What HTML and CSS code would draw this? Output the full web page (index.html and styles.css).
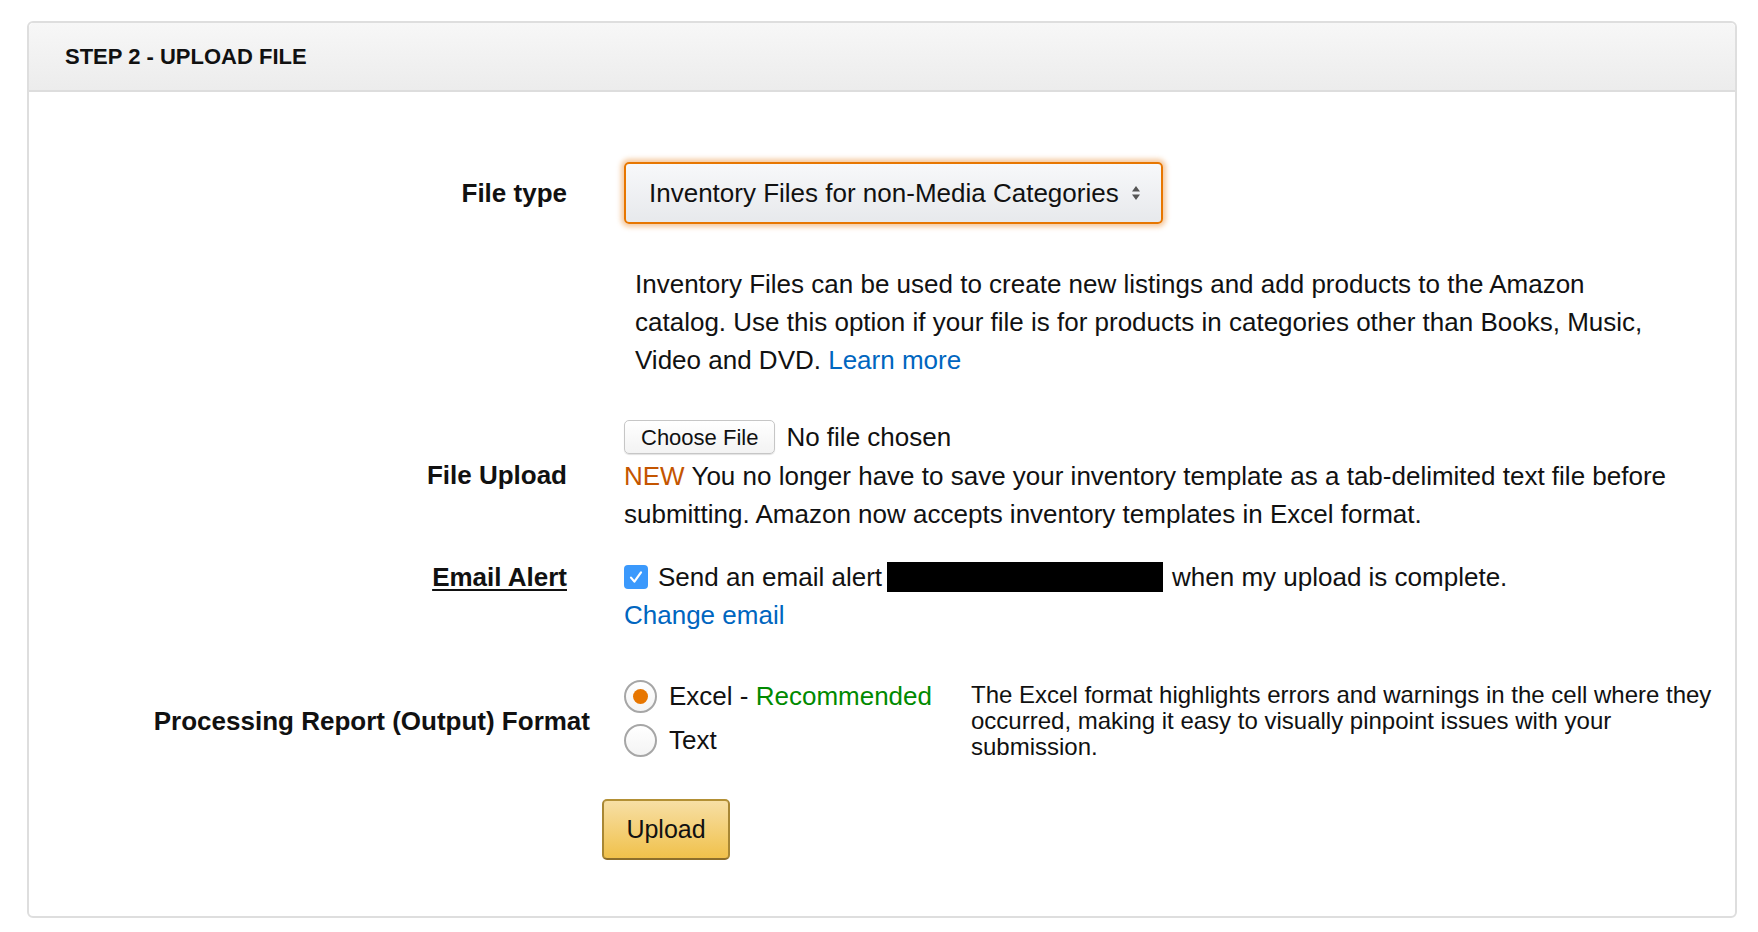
FILE: index.html
```html
<!DOCTYPE html>
<html lang="en">
<head>
<meta charset="utf-8">
<title>Step 2 - Upload File</title>
<link rel="stylesheet" href="styles.css">
</head>
<body>
<div class="panel">
  <div class="panel-head"><h2>STEP 2 - UPLOAD FILE</h2></div>
  <div class="panel-body">
    <div class="row row-center">
      <div class="label">File type</div>
      <div class="field">
        <div class="select">
          <span>Inventory Files for non-Media Categories</span>
          <svg class="arrows" width="8" height="16" viewBox="0 0 8 16"><path d="M0 6.5 L4 1 L8 6.5 Z M0 9.5 L4 15 L8 9.5 Z" fill="#555"/></svg>
        </div>
      </div>
    </div>
    <div class="row row-desc">
      <div class="label"></div>
      <div class="field">
        <p class="desc">Inventory Files can be used to create new listings and add products to the Amazon catalog. Use this option if your file is for products in categories other than Books, Music, Video and DVD. <a href="#" class="link">Learn more</a></p>
      </div>
    </div>
    <div class="row row-center row-upload">
      <div class="label">File Upload</div>
      <div class="field">
        <div class="file-line"><span class="file-btn">Choose File</span><span class="file-name">No file chosen</span></div>
        <p class="lines"><span class="new">NEW</span> You no longer have to save your inventory template as a tab-delimited text file before submitting. Amazon now accepts inventory templates in Excel format.</p>
      </div>
    </div>
    <div class="row row-top row-email">
      <div class="label"><span class="u">Email Alert</span></div>
      <div class="field">
        <div class="lines"><span class="check"><svg width="24" height="24" viewBox="0 0 24 24"><path d="M7 12.6 L10.4 16.6 L17 7.4" fill="none" stroke="#fff" stroke-width="2.2" stroke-linecap="round" stroke-linejoin="round"/></svg></span>Send an email alert<span class="redact"></span>when my upload is complete.</div>
        <div class="lines"><a href="#" class="link">Change email</a></div>
      </div>
    </div>
    <div class="row row-center row-report">
      <div class="label label-wide">Processing Report (Output) Format</div>
      <div class="field field-report">
        <div class="radios">
          <div class="opt"><span class="radio on"></span>Excel - <span class="rec">Recommended</span></div>
          <div class="opt"><span class="radio"></span>Text</div>
        </div>
        <p class="note">The Excel format highlights errors and warnings in the cell where they occurred, making it easy to visually pinpoint issues with your submission.</p>
      </div>
    </div>
    <div class="row row-submit">
      <button class="upload" type="button">Upload</button>
    </div>
  </div>
</div>
</body>
</html>
```

FILE: styles.css
```css
html, body {
  margin: 0;
  padding: 0;
  background: #fff;
}

body {
  padding: 21px 21px 0 27px;
  font-family: "Liberation Sans", Arial, Helvetica, sans-serif;
  color: #111;
  font-size: 26px;
}

.panel {
  width: 1706px;
  border: 2px solid #dedede;
  border-radius: 6px;
  background: #fff;
}

.panel-head {
  background: linear-gradient(#f7f7f7, #ececec);
  border-bottom: 2px solid #dddddd;
  border-radius: 5px 5px 0 0;
}

.panel-head h2 {
  margin: 0;
  padding: 21px 36px 20px;
  font-size: 22px;
  line-height: 26px;
  font-weight: bold;
  color: #111;
}

.panel-body {
  padding: 70px 17px 56px 0;
}

.row {
  display: flex;
  gap: 57px;
}

.row-center { align-items: center; }
.row-top { align-items: flex-start; }

.label {
  flex: 0 0 538px;
  text-align: right;
  font-weight: bold;
  font-size: 26px;
  line-height: 38px;
  color: #111;
}

.label .u { text-decoration: underline; text-underline-offset: 3px; }

.field {
  flex: 0 1 1051px;
  min-width: 0;
}

/* select */
.select {
  box-sizing: border-box;
  width: 539px;
  height: 62px;
  display: flex;
  align-items: center;
  justify-content: space-between;
  padding: 0 21px 0 23px;
  border: 2px solid #e77600;
  border-radius: 5px;
  background: linear-gradient(#f7f8fa, #e7e9ec);
  box-shadow: 0 0 5px 3px rgba(228, 121, 17, 0.4);
  font-size: 26px;
  color: #111;
}

.arrows { display: block; }

/* description */
.row-desc { margin-top: 41px; }

.desc {
  margin: 0;
  padding-left: 11px;
  line-height: 38px;
}

.link { color: #0066c0; text-decoration: none; }

/* file upload */
.row-upload { margin-top: 38px; }

.file-line {
  height: 40px;
  display: flex;
  align-items: center;
}

.file-btn {
  box-sizing: border-box;
  height: 34px;
  display: inline-flex;
  align-items: center;
  padding: 2px 16px 0;
  border: 1px solid #c6c6c6;
  border-radius: 5px;
  background: linear-gradient(#ffffff, #f3f3f3);
  box-shadow: 0 1px 1px rgba(0, 0, 0, 0.12);
  font-size: 22px;
  color: #111;
}

.file-name { margin-left: 11px; font-size: 26px; }

.lines {
  margin: 0;
  line-height: 38px;
}

.new { color: #c45500; }

/* email */
.row-email { margin-top: 25px; }

.check {
  display: inline-block;
  width: 24px;
  height: 24px;
  border-radius: 4px;
  background: #3b99fc;
  vertical-align: -3px;
  margin-right: 10px;
}

.check svg { display: block; }

.redact {
  display: inline-block;
  width: 276px;
  height: 30px;
  background: #000;
  vertical-align: -6px;
  margin: 0 9px 0 5px;
}

/* report */
.row-report { margin-top: 40px; gap: 34px; }

.label-wide { flex-basis: 561px; }

.field-report {
  flex: 1 1 auto;
  display: flex;
  align-items: center;
}

.radios {
  flex: 0 0 347px;
  padding-bottom: 6px;
}

.opt {
  height: 44px;
  display: flex;
  align-items: center;
  font-size: 26px;
  white-space: pre;
}

.radio {
  box-sizing: border-box;
  width: 33px;
  height: 33px;
  border-radius: 50%;
  border: 2px solid #a6a6a6;
  background: linear-gradient(#ffffff, #f4f4f4);
  margin-right: 12px;
  display: flex;
  align-items: center;
  justify-content: center;
}

.radio.on::after {
  content: "";
  width: 15px;
  height: 15px;
  border-radius: 50%;
  background: #e77600;
}

.rec { color: #008a00; }

.note {
  margin: 0;
  flex: 1 1 auto;
  font-size: 24px;
  line-height: 26px;
  color: #111;
}

/* submit */
.row-submit {
  margin-top: 31px;
  padding-left: 573px;
}

.upload {
  box-sizing: border-box;
  width: 128px;
  height: 61px;
  border: 2px solid;
  border-color: #b39035 #a88734 #8c6e2c;
  border-radius: 5px;
  background: linear-gradient(#f7dfa5, #f0c14b);
  font-family: "Liberation Sans", Arial, Helvetica, sans-serif;
  font-size: 25px;
  color: #111;
  padding: 0;
  cursor: pointer;
}
```
